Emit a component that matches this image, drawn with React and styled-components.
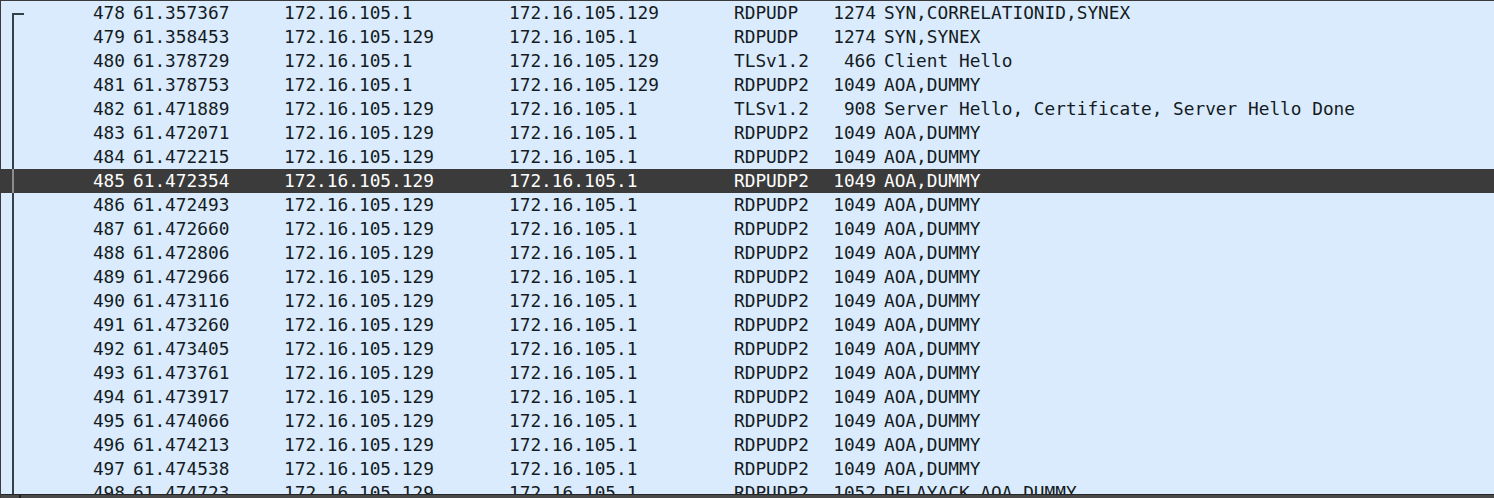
import React from 'react'
import styled, { createGlobalStyle, css } from 'styled-components'

const Global = createGlobalStyle`
    html, body {
        margin: 0;
        padding: 0;
        overflow: hidden;
        background: #daebfd;
    }
`;

const Frame = styled.div`
    height: 498px;
    box-sizing: border-box;
    border-top: 1px solid #3a3a3a;
    border-left: 1px solid #3a3a3a;
    display: flex;
    flex-direction: column;
    background: #daebfd;
    font-family: "DejaVu Sans Mono", "Liberation Mono", monospace;
    font-size: 17.8px;
    color: #141b22;
`;

const List = styled.div`
    flex: 1;
    overflow: hidden;
`;

const Row = styled.div`
    display: grid;
    grid-template-columns: 40px 88px 151px 225px 225px 100px 50px 1fr;
    height: 24px;
    line-height: 24px;
    white-space: pre;
    ${p => p.$selected && css`
        background: #3b3b3b;
        color: #ffffff;
    `}
`;

const Marker = styled.div`
    position: relative;

    &::before {
        content: "";
        position: absolute;
        left: 11px;
        width: 2px;
        top: ${p => (p.$first ? '12px' : '0')};
        bottom: 0;
        background: ${p => (p.$selected ? '#8c8c8c' : '#34414b')};
    }

    ${p => p.$first && css`
        &::after {
            content: "";
            position: absolute;
            left: 11px;
            top: 12px;
            width: 12px;
            height: 2px;
            background: #34414b;
        }
    `}
`;

const Cell = styled.div`
    overflow: hidden;
    text-align: ${p => (p.$right ? 'right' : 'left')};
    padding-left: ${p => (p.$right ? '0' : '4px')};
    padding-right: ${p => (p.$right ? '4px' : '0')};
`;

const Footer = styled.div`
    height: 3px;
    border-top: 1px solid #262626;
    background: #4a4a4a;
    position: relative;

    &::before {
        content: "";
        position: absolute;
        left: 18px;
        top: 0;
        width: 2px;
        height: 3px;
        background: #1f1f1f;
    }
`;

const packets = [
    [478, '61.357367', '172.16.105.1', '172.16.105.129', 'RDPUDP', 1274, 'SYN,CORRELATIONID,SYNEX'],
    [479, '61.358453', '172.16.105.129', '172.16.105.1', 'RDPUDP', 1274, 'SYN,SYNEX'],
    [480, '61.378729', '172.16.105.1', '172.16.105.129', 'TLSv1.2', 466, 'Client Hello'],
    [481, '61.378753', '172.16.105.1', '172.16.105.129', 'RDPUDP2', 1049, 'AOA,DUMMY'],
    [482, '61.471889', '172.16.105.129', '172.16.105.1', 'TLSv1.2', 908, 'Server Hello, Certificate, Server Hello Done'],
    [483, '61.472071', '172.16.105.129', '172.16.105.1', 'RDPUDP2', 1049, 'AOA,DUMMY'],
    [484, '61.472215', '172.16.105.129', '172.16.105.1', 'RDPUDP2', 1049, 'AOA,DUMMY'],
    [485, '61.472354', '172.16.105.129', '172.16.105.1', 'RDPUDP2', 1049, 'AOA,DUMMY'],
    [486, '61.472493', '172.16.105.129', '172.16.105.1', 'RDPUDP2', 1049, 'AOA,DUMMY'],
    [487, '61.472660', '172.16.105.129', '172.16.105.1', 'RDPUDP2', 1049, 'AOA,DUMMY'],
    [488, '61.472806', '172.16.105.129', '172.16.105.1', 'RDPUDP2', 1049, 'AOA,DUMMY'],
    [489, '61.472966', '172.16.105.129', '172.16.105.1', 'RDPUDP2', 1049, 'AOA,DUMMY'],
    [490, '61.473116', '172.16.105.129', '172.16.105.1', 'RDPUDP2', 1049, 'AOA,DUMMY'],
    [491, '61.473260', '172.16.105.129', '172.16.105.1', 'RDPUDP2', 1049, 'AOA,DUMMY'],
    [492, '61.473405', '172.16.105.129', '172.16.105.1', 'RDPUDP2', 1049, 'AOA,DUMMY'],
    [493, '61.473761', '172.16.105.129', '172.16.105.1', 'RDPUDP2', 1049, 'AOA,DUMMY'],
    [494, '61.473917', '172.16.105.129', '172.16.105.1', 'RDPUDP2', 1049, 'AOA,DUMMY'],
    [495, '61.474066', '172.16.105.129', '172.16.105.1', 'RDPUDP2', 1049, 'AOA,DUMMY'],
    [496, '61.474213', '172.16.105.129', '172.16.105.1', 'RDPUDP2', 1049, 'AOA,DUMMY'],
    [497, '61.474538', '172.16.105.129', '172.16.105.1', 'RDPUDP2', 1049, 'AOA,DUMMY'],
    [498, '61.474723', '172.16.105.129', '172.16.105.1', 'RDPUDP2', 1052, 'DELAYACK,AOA,DUMMY'],
];

const SELECTED = 485;

const App = () => {
    return (
        <>
            <Global />
            <Frame>
                <List>
                    {packets.map((p, i) => {
                        const [no, time, src, dst, proto, len, info] = p;
                        const selected = no === SELECTED;
                        return (
                            <Row key={no} $selected={selected}>
                                <Marker $first={i === 0} $selected={selected} />
                                <Cell $right>{no}</Cell>
                                <Cell>{time}</Cell>
                                <Cell>{src}</Cell>
                                <Cell>{dst}</Cell>
                                <Cell>{proto}</Cell>
                                <Cell $right>{len}</Cell>
                                <Cell>{info}</Cell>
                            </Row>
                        )
                    })}
                </List>
                <Footer />
            </Frame>
        </>
    )
}

export default App;
